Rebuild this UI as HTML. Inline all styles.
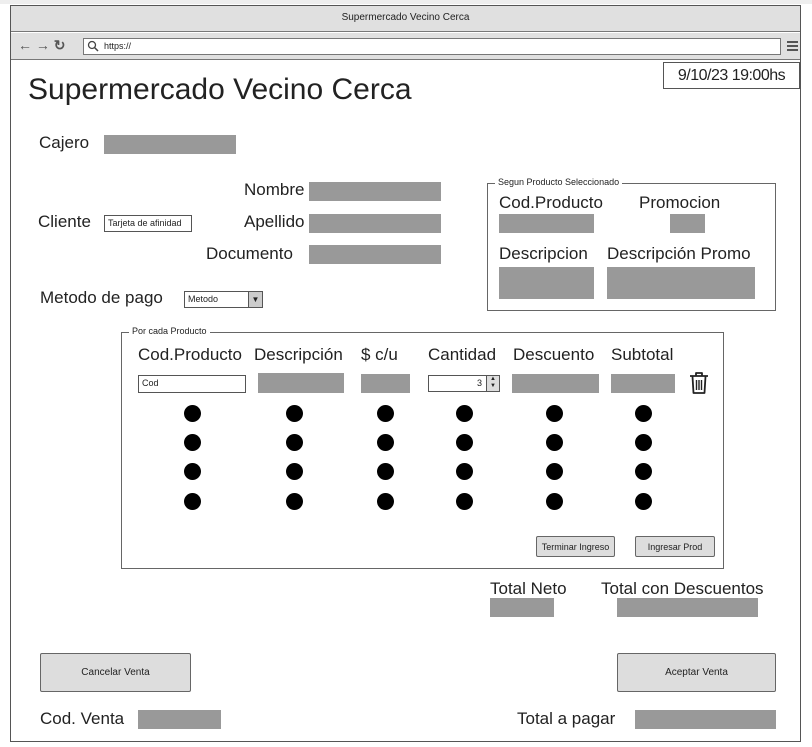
<!DOCTYPE html>
<html><head><meta charset="utf-8"><style>
*{margin:0;padding:0;box-sizing:border-box}
body{width:812px;height:747px;background:#fff;position:relative;overflow:hidden;font-family:"Liberation Sans",sans-serif;color:#222}
.a{position:absolute}
.g{position:absolute;background:#999}
.t{position:absolute;font-size:17px;white-space:nowrap;line-height:20px}
.dot{position:absolute;width:17px;height:17px;border-radius:50%;background:#000}
.btn{position:absolute;background:#ddd;border:1px solid #666;border-radius:2px;font-size:10px;display:flex;align-items:center;justify-content:center}
.in{position:absolute;background:#fff;border:1px solid #555;font-size:9px;padding-left:3px;line-height:15px}
</style></head><body>
<div class="a" style="left:0;top:0;width:812px;height:4px;background:#eee"></div>
<div class="a" style="left:10px;top:5px;width:791px;height:737px;border:1px solid #555"></div>
<div class="a" style="left:11px;top:6px;width:789px;height:26px;background:#e0e0e0;border-bottom:1px solid #777;font-size:10px;text-align:center;line-height:24px">Supermercado Vecino Cerca</div>
<div class="a" style="left:11px;top:33px;width:789px;height:27px;background:#e0e0e0;border-bottom:1px solid #777"></div>
<div class="a" style="left:18px;top:37px;font-size:14px;color:#555;font-weight:bold">&#8592; &#8594; &#8635;</div>
<div class="a" style="left:83px;top:38px;width:698px;height:17px;background:#fff;border:1px solid #777;font-size:9px;line-height:15px;padding-left:20px">https://</div>
<svg class="a" style="left:87px;top:40px" width="12" height="12"><circle cx="5" cy="5" r="3.5" fill="none" stroke="#444" stroke-width="1.3"/><line x1="7.5" y1="7.5" x2="11" y2="11" stroke="#444" stroke-width="1.5"/></svg>
<div class="a" style="left:787px;top:41px;width:11px;height:2px;background:#555;box-shadow:0 4px #555,0 8px #555"></div>
<div class="a" style="left:663px;top:62px;width:137px;height:27px;border:1px solid #555;font-size:16px;letter-spacing:-0.5px;text-align:center;line-height:25px">9/10/23 19:00hs</div>
<div class="t" style="left:28px;top:73px;font-size:30px;line-height:34px">Supermercado Vecino Cerca</div>
<div class="t" style="left:39px;top:133px">Cajero</div><div class="g" style="left:104px;top:135px;width:132px;height:19px"></div>
<div class="t" style="left:244px;top:180px">Nombre</div><div class="g" style="left:309px;top:182px;width:132px;height:19px"></div>
<div class="t" style="left:244px;top:212px">Apellido</div><div class="g" style="left:309px;top:214px;width:132px;height:19px"></div>
<div class="t" style="left:206px;top:244px">Documento</div><div class="g" style="left:309px;top:245px;width:132px;height:19px"></div>
<div class="t" style="left:38px;top:212px">Cliente</div>
<div class="in" style="left:104px;top:215px;width:88px;height:17px;font-size:9px">Tarjeta de afinidad</div>
<div class="t" style="left:40px;top:288px">Metodo de pago</div>
<div class="in" style="left:184px;top:291px;width:79px;height:17px">Metodo</div>
<div class="a" style="left:248px;top:291px;width:15px;height:17px;background:#ccc;border:1px solid #555;font-size:8px;text-align:center;line-height:15px">&#9660;</div>
<div class="a" style="left:487px;top:183px;width:289px;height:128px;border:1px solid #666"></div>
<div class="a" style="left:495px;top:177px;background:#fff;padding:0 3px;font-size:9px">Segun Producto Seleccionado</div>
<div class="t" style="left:499px;top:193px">Cod.Producto</div><div class="g" style="left:499px;top:214px;width:95px;height:19px"></div>
<div class="t" style="left:639px;top:193px">Promocion</div><div class="g" style="left:670px;top:214px;width:35px;height:19px"></div>
<div class="t" style="left:499px;top:244px">Descripcion</div><div class="g" style="left:499px;top:267px;width:95px;height:32px"></div>
<div class="t" style="left:607px;top:244px">Descripción Promo</div><div class="g" style="left:607px;top:267px;width:148px;height:32px"></div>
<div class="a" style="left:121px;top:332px;width:603px;height:237px;border:1px solid #666"></div>
<div class="a" style="left:129px;top:326px;background:#fff;padding:0 3px;font-size:9px">Por cada Producto</div>
<div class="t" style="left:138px;top:345px">Cod.Producto</div>
<div class="t" style="left:254px;top:345px">Descripción</div>
<div class="t" style="left:361px;top:345px">$ c/u</div>
<div class="t" style="left:428px;top:345px">Cantidad</div>
<div class="t" style="left:513px;top:345px">Descuento</div>
<div class="t" style="left:611px;top:345px">Subtotal</div>
<div class="in" style="left:138px;top:375px;width:108px;height:18px">Cod</div>
<div class="g" style="left:258px;top:373px;width:86px;height:20px"></div>
<div class="g" style="left:361px;top:374px;width:49px;height:19px"></div>
<div class="in" style="left:428px;top:375px;width:72px;height:17px;text-align:right;padding-right:17px">3</div>
<div class="a" style="left:486px;top:375px;width:14px;height:17px;background:#ddd;border:1px solid #555;font-size:6px;line-height:7px;text-align:center">&#9650;<br>&#9660;</div>
<div class="g" style="left:512px;top:374px;width:87px;height:19px"></div>
<div class="g" style="left:611px;top:374px;width:64px;height:19px"></div>
<svg class="a" style="left:688px;top:371px" width="22" height="24"><path d="M2 5h18M8 5V2h6v3M4.5 5.5l1 16.5h11l1-16.5" fill="none" stroke="#222" stroke-width="1.8" stroke-linejoin="round"/><path d="M8.5 9v10M11 9v10M13.5 9v10" stroke="#222" stroke-width="1.4"/></svg>
<div class="dot" style="left:184px;top:405px"></div><div class="dot" style="left:286px;top:405px"></div><div class="dot" style="left:377px;top:405px"></div><div class="dot" style="left:456px;top:405px"></div><div class="dot" style="left:546px;top:405px"></div><div class="dot" style="left:635px;top:405px"></div>
<div class="dot" style="left:184px;top:434px"></div><div class="dot" style="left:286px;top:434px"></div><div class="dot" style="left:377px;top:434px"></div><div class="dot" style="left:456px;top:434px"></div><div class="dot" style="left:546px;top:434px"></div><div class="dot" style="left:635px;top:434px"></div>
<div class="dot" style="left:184px;top:463px"></div><div class="dot" style="left:286px;top:463px"></div><div class="dot" style="left:377px;top:463px"></div><div class="dot" style="left:456px;top:463px"></div><div class="dot" style="left:546px;top:463px"></div><div class="dot" style="left:635px;top:463px"></div>
<div class="dot" style="left:184px;top:493px"></div><div class="dot" style="left:286px;top:493px"></div><div class="dot" style="left:377px;top:493px"></div><div class="dot" style="left:456px;top:493px"></div><div class="dot" style="left:546px;top:493px"></div><div class="dot" style="left:635px;top:493px"></div>
<div class="btn" style="left:536px;top:536px;width:79px;height:21px;font-size:9px">Terminar Ingreso</div>
<div class="btn" style="left:635px;top:536px;width:80px;height:21px;font-size:9px">Ingresar Prod</div>
<div class="t" style="left:490px;top:579px">Total Neto</div><div class="g" style="left:490px;top:598px;width:64px;height:19px"></div>
<div class="t" style="left:601px;top:579px">Total con Descuentos</div><div class="g" style="left:617px;top:598px;width:141px;height:19px"></div>
<div class="btn" style="left:40px;top:653px;width:151px;height:39px">Cancelar Venta</div>
<div class="btn" style="left:617px;top:653px;width:159px;height:39px">Aceptar Venta</div>
<div class="t" style="left:40px;top:709px">Cod. Venta</div><div class="g" style="left:138px;top:710px;width:83px;height:19px"></div>
<div class="t" style="left:517px;top:709px">Total a pagar</div><div class="g" style="left:635px;top:710px;width:141px;height:19px"></div>
</body></html>
